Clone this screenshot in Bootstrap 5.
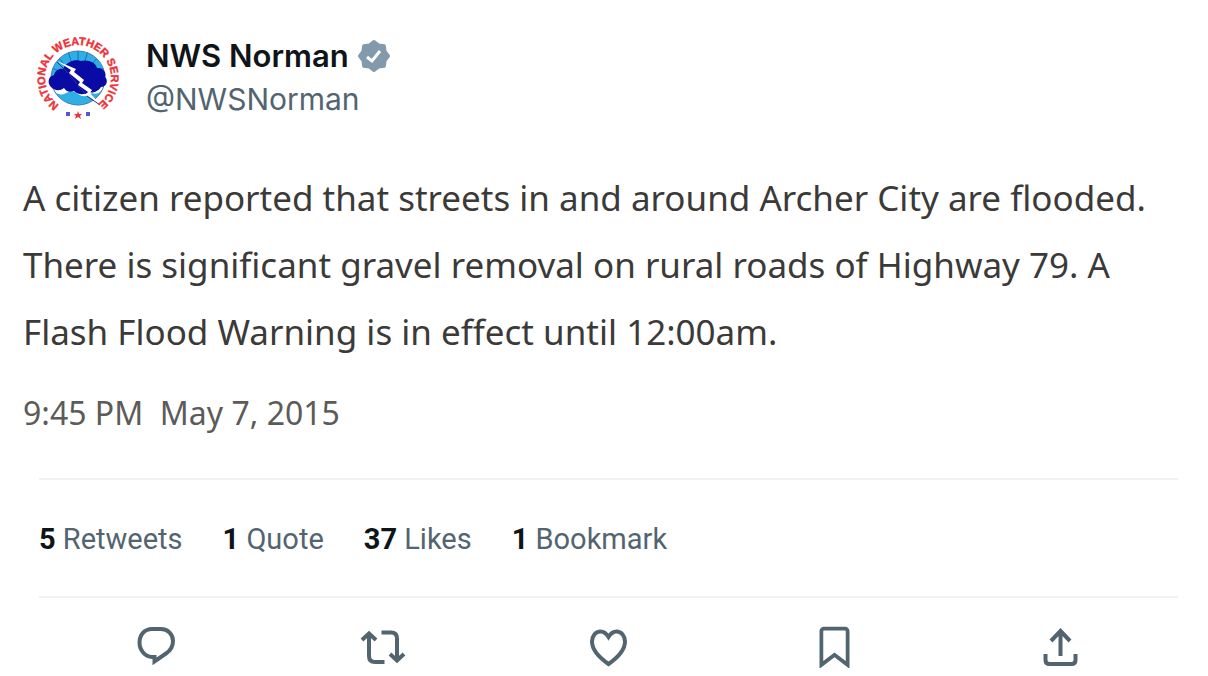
<!DOCTYPE html>
<html lang="en">
<head>
<meta charset="utf-8">
<meta name="viewport" content="width=device-width, initial-scale=1">
<title>NWS Norman</title>
<link href="https://cdn.jsdelivr.net/npm/bootstrap@5.3.0/dist/css/bootstrap.min.css" rel="stylesheet">
<style>
  body { background: #fff; color: #0f1419; font-family: Inter, "Liberation Sans", sans-serif; }
  .post { padding: 34px 30px 0 23px; }
  .author { padding-left: 11px; gap: 24px; }
  .author-name { font-size: 31px; line-height: 44px; font-weight: 600; gap: 8px; }
  .author-handle { font-size: 30px; line-height: 42px; color: #536471; }
  .post-text { font-family: "Noto Sans", "Open Sans", sans-serif; font-size: 35px; line-height: 67px; color: #3b3a39; margin-top: 42px; }
  .post-time { font-family: "Noto Sans", "Open Sans", sans-serif; font-size: 32px; line-height: 44px; color: #5c5b5a; margin-top: 26px; }
  .post-foot { margin-left: 16px; }
  .stats { font-family: Roboto, sans-serif; font-size: 29px; line-height: 40px; gap: 40px; margin-top: 43px; padding: 39px 0 37px; border-top: 2px solid #eff3f4; border-bottom: 2px solid #eff3f4; }
  .stats a { color: #536471; text-decoration: none; }
  .stats strong { color: #0f1419; }
  .actions { padding: 25px 4px 0; }
  .actions button { color: #536471; line-height: 0; }
  .actions svg { overflow: visible; }
</style>
</head>
<body>
<article class="post">
  <header class="author d-flex">
    <svg width="88" height="88" viewBox="-44 -44 88 88" role="img" aria-label="National Weather Service logo">
      <defs>
        <path id="ring" d="M-19 27A33 33 0 1 1 19 27"/>
        <clipPath id="disc"><circle r="27"/></clipPath>
      </defs>
      <circle r="27" fill="#2fb0e4"/>
      <g clip-path="url(#disc)">
        <path d="M0-29V-12M-10-27L-6-14M10-27L6-14M-19-20L-11-10M19-20L11-10M-26-10L-12-4M26-10L12-4" stroke="#1d6fb5" stroke-width="1"/>
        <path d="M-28 9Q-20 20-12 15Q-5 11 0 16Q7 21 14 15Q21 18 27 8V2H-28z" fill="#fff"/>
      </g>
      <circle r="27" fill="none" stroke="#4778bc"/>
      <path d="M-27 9C-31 5-30-2-24-3C-23-8-18-10-15-9C-11-18-1-19 3-17C9-19 18-16 19-10C25-11 29-5 27-1C31 3 28 9 23 9C19 15 13 15 11 14C5 18-1 16-4 13C-9 15-12 13-14 10C-19 14-24 12-27 9z" fill="#0a0aa4"/>
      <path d="M-21-17L-7-8L-9-5L2 4L0 7L10 14L8 17L22 26L12 15L14 12L4 5L6 2L-4-6L-2-9z" fill="#fff"/>
      <path d="M-21-16L-10-5M-9-4L-1 6M0 8L8 16M9 18L22 27" fill="none" stroke="#31318f" stroke-width="1"/>
      <text font-family="Liberation Sans, sans-serif" font-size="11" font-weight="700" fill="#ee3038" stroke="#ee3038" stroke-width=".4"><textPath href="#ring">NATIONAL WEATHER SERVICE</textPath></text>
      <path d="M0 33l1 3h3l-2 2 1 3-3-2-3 2 1-3-2-2h3z" fill="#ee3038"/>
      <path d="M-12 34h4v4h-4zM8 34h4v4h-4z" fill="#5757cf"/>
    </svg>
    <div>
      <div class="author-name d-flex align-items-center">
        <span>NWS Norman</span>
        <svg width="34" height="34" viewBox="-17 -17 34 34" role="img" aria-label="Verified account">
          <path d="M0-14.5L4.6-11.1L10.3-10.3L11.1-4.6L14.5 0L11.1 4.6L10.3 10.3L4.6 11.1L0 14.5L-4.6 11.1L-10.3 10.3L-11.1 4.6L-14.5 0L-11.1-4.6L-10.3-10.3L-4.6-11.1z" fill="#829aab" stroke="#829aab" stroke-width="3" stroke-linejoin="round"/>
          <path d="M-7 1L-2 5L6-5" fill="none" stroke="#fff" stroke-width="3"/>
        </svg>
      </div>
      <div class="author-handle">@NWSNorman</div>
    </div>
  </header>
  <p class="post-text mb-0">A citizen reported that streets in and around Archer City are flooded. There is significant gravel removal on rural roads of Highway 79. A Flash Flood Warning is in effect until 12:00am.</p>
  <div class="post-time"><time datetime="2015-05-07T21:45">9:45 PM&nbsp; May 7, 2015</time></div>
  <footer class="post-foot">
    <div class="stats d-flex flex-wrap">
      <a href="#"><strong>5</strong> Retweets</a>
      <a href="#"><strong>1</strong> Quote</a>
      <a href="#"><strong>37</strong> Likes</a>
      <a href="#"><strong>1</strong> Bookmark</a>
    </div>
    <div class="actions row g-0 text-center">
      <div class="col"><button class="border-0 bg-transparent p-0" type="button" aria-label="Reply"><svg width="45" height="45" viewBox="0 0 45 45" fill="none" stroke="currentColor" stroke-width="4"><path d="M18 6H27C34 6 39 11.500 39 18C39 23.500 36.500 27.500 32 30.500L20.500 38.500V34H18C11 34 5.500 27 5.500 19.500C5.500 12 10.500 6 18 6z"/></svg></button></div>
      <div class="col"><button class="border-0 bg-transparent p-0" type="button" aria-label="Retweet"><svg width="45" height="45" viewBox="0 0 45 45" fill="none" stroke="currentColor" stroke-width="4"><path d="M2 17L9 10.500L16 17M9 10.500V33Q9 39 15 39H24.500M21.500 9.500H31Q37 9.500 37 15.500V37.500M30 31L37 37.500L44 31"/></svg></button></div>
      <div class="col"><button class="border-0 bg-transparent p-0" type="button" aria-label="Like"><svg width="45" height="45" viewBox="0 0 45 45" fill="none" stroke="currentColor" stroke-width="4"><path d="M22.500 14C20 10 17.500 8.500 14.500 8.500C9.500 8.500 6 13 6 18.500C6 26 12.500 34 22.500 41C32.500 34 39 26 39 18.500C39 13 35.500 8.500 30.500 8.500C27.500 8.500 25 10 22.500 14z"/></svg></button></div>
      <div class="col"><button class="border-0 bg-transparent p-0" type="button" aria-label="Bookmark"><svg width="45" height="45" viewBox="0 0 24 24" fill="currentColor"><path d="M4 4.500C4 3.120 5.119 2 6.500 2h11C18.881 2 20 3.120 20 4.500v19.900l-8-6.100-8 6.100V4.500zM6.500 4c-.276 0-.5.220-.5.500v15.800l6-4.600 6 4.600V4.500c0-.280-.224-.5-.5-.5h-11z"/></svg></button></div>
      <div class="col"><button class="border-0 bg-transparent p-0" type="button" aria-label="Share"><svg width="45" height="45" viewBox="0 0 45 45" fill="none" stroke="currentColor" stroke-width="4"><path d="M22.500 33V8M13 18L22.500 8L32 18M7.500 31V37Q7.500 41 11.500 41H33.500Q37.500 41 37.500 37V31"/></svg></button></div>
    </div>
  </footer>
</article>
<script src="https://cdn.jsdelivr.net/npm/bootstrap@5.3.0/dist/js/bootstrap.bundle.min.js"></script>
</body>
</html>
